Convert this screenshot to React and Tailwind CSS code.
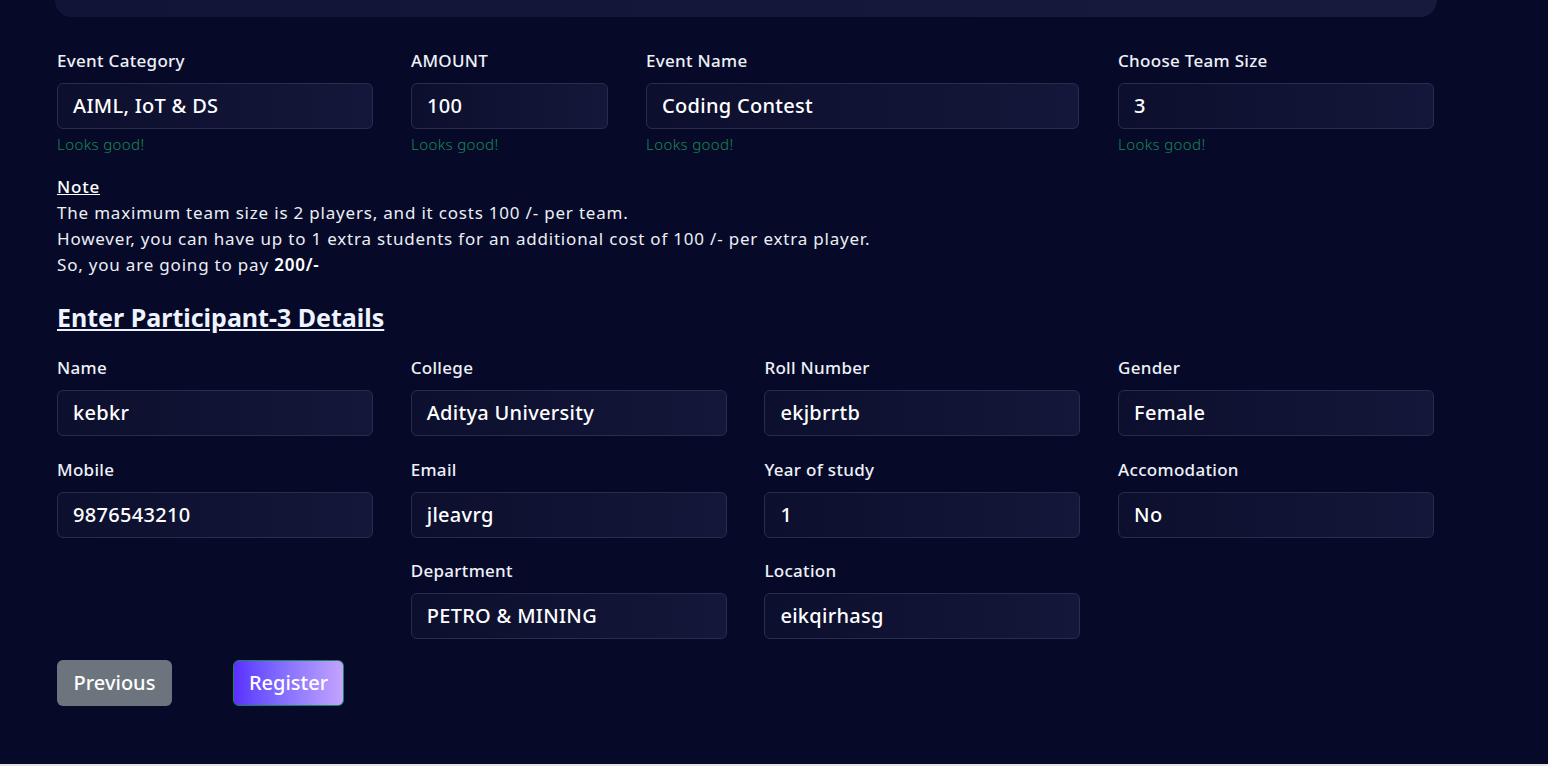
import React from 'react';

const font = { fontFamily: '"Noto Sans", Inter, sans-serif' };

function Field({ label, value, valid, className = '' }) {
  return (
    <div className={`flex flex-col ${className}`}>
      <label className="text-[17px] leading-6 font-medium tracking-[0.3px] text-[#eef1f8] mb-[10px]">{label}</label>
      <div className="h-[46px] flex items-center pl-[15px] pr-4 rounded-md border border-[#2a2c4c] bg-gradient-to-r from-[#0d0f2e] to-[#15173a] text-white text-[20px] tracking-[0.3px] font-medium">
        {value}
      </div>
      {valid && <p className="mt-[5px] text-[15px] leading-5 font-light tracking-[0.4px] text-[#198754]">Looks good!</p>}
    </div>
  );
}

export default function App() {
  return (
    <div style={font} className="min-h-[766px] bg-[#e6e6e6]">
      <div className="h-[764px] bg-[#060a28] px-[57px]">
        <div className="-mx-[2px] w-[1382px] h-[17px] rounded-b-[30px] bg-gradient-to-r from-[#121437] to-[#171a3c]" />

        <div className="flex mt-[32px] w-[1377px]">
          <Field label="Event Category" value="AIML, IoT & DS" valid className="w-[316px]" />
          <Field label="AMOUNT" value="100" valid className="w-[197px] ml-[38px]" />
          <Field label="Event Name" value="Coding Contest" valid className="w-[433px] ml-[38px]" />
          <Field label="Choose Team Size" value="3" valid className="w-[316px] ml-[39px]" />
        </div>

        <div className="mt-[20px] text-[17px] leading-[26px] tracking-[0.8px] text-[#eceef6]">
          <p className="font-medium underline text-white">Note</p>
          <p>The maximum team size is 2 players, and it costs 100 /- per team.</p>
          <p>However, you can have up to 1 extra students for an additional cost of 100 /- per extra player.</p>
          <p>So, you are going to pay <span className="font-semibold text-white">200/-</span></p>
        </div>

        <h2 className="mt-[23px] text-[25px] leading-8 font-bold underline text-[#eef4ff]">Enter Participant-3 Details</h2>

        <div className="grid grid-cols-[316px_316px_316px_316px] gap-x-[37.7px] gap-y-[21.5px] mt-[23px] w-[1377px]">
          <Field label="Name" value="kebkr" />
          <Field label="College" value="Aditya University" />
          <Field label="Roll Number" value="ekjbrrtb" />
          <Field label="Gender" value="Female" />
          <Field label="Mobile" value="9876543210" />
          <Field label="Email" value="jleavrg" />
          <Field label="Year of study" value="1" />
          <Field label="Accomodation" value="No" />
          <div />
          <Field label="Department" value="PETRO & MINING" />
          <Field label="Location" value="eikqirhasg" />
        </div>

        <div className="flex mt-[20.5px]">
          <button className="h-[46px] w-[115px] rounded-md bg-[#6c757d] text-white text-[20px] font-medium">Previous</button>
          <button className="ml-[61px] h-[46px] w-[111px] rounded-md border border-[#198754] bg-gradient-to-r from-[#5b2dff] to-[#c4a3ff] text-white text-[20px] font-medium">Register</button>
        </div>
      </div>
    </div>
  );
}
